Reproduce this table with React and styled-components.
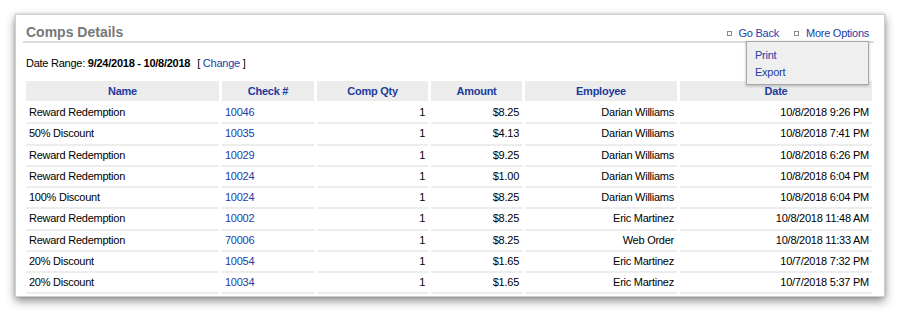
import React from 'react';
import styled, { createGlobalStyle } from 'styled-components';

const GlobalStyle = createGlobalStyle`
  body {
    margin: 0;
    background: #fff;
    font-family: "Liberation Sans", Arial, sans-serif;
  }
`;

const Page = styled.div`
  width: 902px;
  height: 320px;
  padding: 14px 0 0 15px;
  box-sizing: border-box;
  overflow: hidden;
`;

const Panel = styled.div`
  position: relative;
  width: 870px;
  height: 283px;
  box-sizing: border-box;
  background: #fff;
  border: 1px solid #cfcfcf;
  box-shadow: 0 4px 9px rgba(0, 0, 0, 0.45), 0 0 3px rgba(0, 0, 0, 0.15);
  padding: 2px 10px 0 7px;
  letter-spacing: -0.25px;
`;

const TitleBar = styled.div`
  display: flex;
  align-items: flex-end;
  justify-content: space-between;
  border-bottom: 2px solid #dcdcdc;
  height: 26px;
  box-sizing: border-box;
  padding: 0 5px 0 3px;
`;

const Title = styled.h2`
  margin: 0 0 1px;
  font-size: 14px;
  font-weight: bold;
  color: #777;
  letter-spacing: 0;
`;

const Actions = styled.div`
  display: flex;
  gap: 15px;
  font-size: 11px;
  line-height: 15px;
`;

const ActionLink = styled.a`
  display: flex;
  align-items: center;
  gap: 7px;
  color: #2140a6;
  text-decoration: none;
  &::before {
    content: '';
    width: 3px;
    height: 3px;
    border: 1px solid #8a8a8a;
    background: #fff;
  }
`;

const Menu = styled.div`
  position: absolute;
  top: 26px;
  right: 15px;
  width: 123px;
  height: 44px;
  box-sizing: border-box;
  background: #efefef;
  border: 1px solid #a8a8a8;
  box-shadow: 0 1px 3px rgba(0, 0, 0, 0.25);
  padding: 5px 0 0 8px;
  z-index: 2;
`;

const MenuItem = styled.div`
  font-size: 11px;
  line-height: 16.5px;
  color: #2140a6;
`;

const DateRange = styled.div`
  font-size: 11px;
  color: #000;
  margin: 13px 0 0 3px;
  height: 15px;
  line-height: 15px;
  b { font-weight: bold; }
  span { margin-left: 7px; }
  a { color: #2140a6; text-decoration: none; }
`;

const Table = styled.table`
  border-collapse: separate;
  border-spacing: 3px 0;
  margin-top: 10px;
  width: 852px;
  font-size: 11px;
  table-layout: fixed;
`;

const Th = styled.th`
  background: #ececec;
  color: #1e3b9e;
  font-weight: bold;
  height: 20px;
  padding: 0;
  text-align: center;
  border-bottom: 2px solid #fff;
`;

const Td = styled.td`
  height: 19.25px;
  padding: 0 3px;
  border-bottom: 2px solid #ededed;
  text-align: ${p => (p.$right ? 'right' : 'left')};
  color: ${p => (p.$link ? '#2140a6' : '#000')};
  white-space: nowrap;
  line-height: 19px;
`;

const columns = [
  { title: 'Name', width: 193 },
  { title: 'Check #', width: 92 },
  { title: 'Comp Qty', width: 111 },
  { title: 'Amount', width: 91 },
  { title: 'Employee', width: 152 },
  { title: 'Date', width: 192 },
];

const rows = [
  ['Reward Redemption', '10046', '1', '$8.25', 'Darian Williams', '10/8/2018 9:26 PM'],
  ['50% Discount', '10035', '1', '$4.13', 'Darian Williams', '10/8/2018 7:41 PM'],
  ['Reward Redemption', '10029', '1', '$9.25', 'Darian Williams', '10/8/2018 6:26 PM'],
  ['Reward Redemption', '10024', '1', '$1.00', 'Darian Williams', '10/8/2018 6:04 PM'],
  ['100% Discount', '10024', '1', '$8.25', 'Darian Williams', '10/8/2018 6:04 PM'],
  ['Reward Redemption', '10002', '1', '$8.25', 'Eric Martinez', '10/8/2018 11:48 AM'],
  ['Reward Redemption', '70006', '1', '$8.25', 'Web Order', '10/8/2018 11:33 AM'],
  ['20% Discount', '10054', '1', '$1.65', 'Eric Martinez', '10/7/2018 7:32 PM'],
  ['20% Discount', '10034', '1', '$1.65', 'Eric Martinez', '10/7/2018 5:37 PM'],
];

export default function App() {
  return (
    <>
      <GlobalStyle />
      <Page>
        <Panel>
          <TitleBar>
            <Title>Comps Details</Title>
            <Actions>
              <ActionLink href="#">Go Back</ActionLink>
              <ActionLink href="#">More Options</ActionLink>
            </Actions>
          </TitleBar>
          <Menu>
            <MenuItem>Print</MenuItem>
            <MenuItem>Export</MenuItem>
          </Menu>
          <DateRange>
            Date Range: <b>9/24/2018 - 10/8/2018</b>
            <span>[ <a href="#">Change</a> ]</span>
          </DateRange>
          <Table>
            <colgroup>
              {columns.map(c => (
                <col key={c.title} style={{ width: c.width }} />
              ))}
            </colgroup>
            <thead>
              <tr>
                {columns.map(c => (
                  <Th key={c.title}>{c.title}</Th>
                ))}
              </tr>
            </thead>
            <tbody>
              {rows.map((r, i) => (
                <tr key={i}>
                  <Td>{r[0]}</Td>
                  <Td $link>{r[1]}</Td>
                  <Td $right>{r[2]}</Td>
                  <Td $right>{r[3]}</Td>
                  <Td $right>{r[4]}</Td>
                  <Td $right>{r[5]}</Td>
                </tr>
              ))}
            </tbody>
          </Table>
        </Panel>
      </Page>
    </>
  );
}
